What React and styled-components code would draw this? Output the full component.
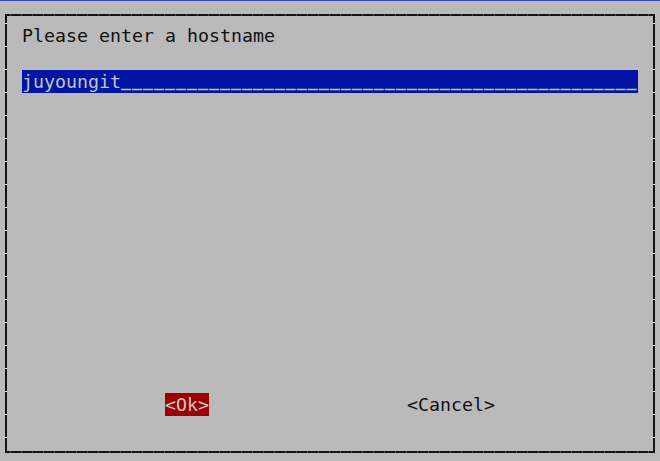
import React from "react";
import styled, { createGlobalStyle } from "styled-components";

const Global = createGlobalStyle`
  html, body {
    margin: 0;
    padding: 0;
    background: #bababa;
  }
`;

var Screen = styled.div`
  width: 660px;
  height: 461px;
  box-sizing: border-box;
  border-top: 1px solid #2e47c4;
  background: #bababa;
  font-family: "DejaVu Sans Mono", "Liberation Mono", monospace;
  font-size: 18.27px;
  line-height: 23px;
  color: #111;
  padding: 13px 0 0 5px;
  overflow: hidden;
`;

var Dialog = styled.div`
  position: relative;
  width: 650px;
  height: 439px;
  box-sizing: border-box;
  border: 2px solid #141414;
  display: flex;
  flex-direction: column;
  padding: 8px 0 0 15px;

  &::after {
    content: "";
    position: absolute;
    inset: -2px;
    pointer-events: none;
    background:
      repeating-linear-gradient(to bottom, transparent 0 9px, #e4e4e4 9px 10px, transparent 10px 23px) left top / 2px 100% no-repeat,
      repeating-linear-gradient(to bottom, transparent 0 9px, #e4e4e4 9px 10px, transparent 10px 23px) right top / 2px 100% no-repeat,
      repeating-linear-gradient(to right, transparent 0 5px, #4a4a4a 5px 6px, transparent 6px 11px) left top / 100% 2px no-repeat,
      repeating-linear-gradient(to right, transparent 0 5px, #4a4a4a 5px 6px, transparent 6px 11px) left bottom / 100% 2px no-repeat;
  }
`;

var Title = styled.div`
  white-space: pre;
  height: 23px;
`;

var Input = styled.div`
  margin-top: 23px;
  width: 616px;
  height: 23px;
  background: #0014a6;
  color: #c4c4c4;
  white-space: pre;
  overflow: hidden;
`;

var Fill = styled.span`
  font-size: 16.6px;
  letter-spacing: 1px;
  font-weight: bold;
  vertical-align: 1px;
`;

var Spacer = styled.div`
  flex: 1;
`;

var ButtonRow = styled.div`
  display: flex;
  gap: 198px;
  padding-left: 143px;
  margin-bottom: 35px;
`;

var Button = styled.span`
  white-space: pre;
  height: 23px;
  background: ${(p) => (p.$active ? "#9c0000" : "transparent")};
  color: ${(p) => (p.$active ? "#c8c8c8" : "#111")};
`;

export default function App() {
  const value = "juyoungit";
  const fill = "_".repeat(56 - value.length);
  return (
    <>
      <Global />
      <Screen>
        <Dialog>
          <Title>Please enter a hostname</Title>
          <Input>
            {value}
            <Fill>{fill}</Fill>
          </Input>
          <Spacer />
          <ButtonRow>
            <Button $active>{"<Ok>"}</Button>
            <Button>{"<Cancel>"}</Button>
          </ButtonRow>
        </Dialog>
      </Screen>
    </>
  );
}
